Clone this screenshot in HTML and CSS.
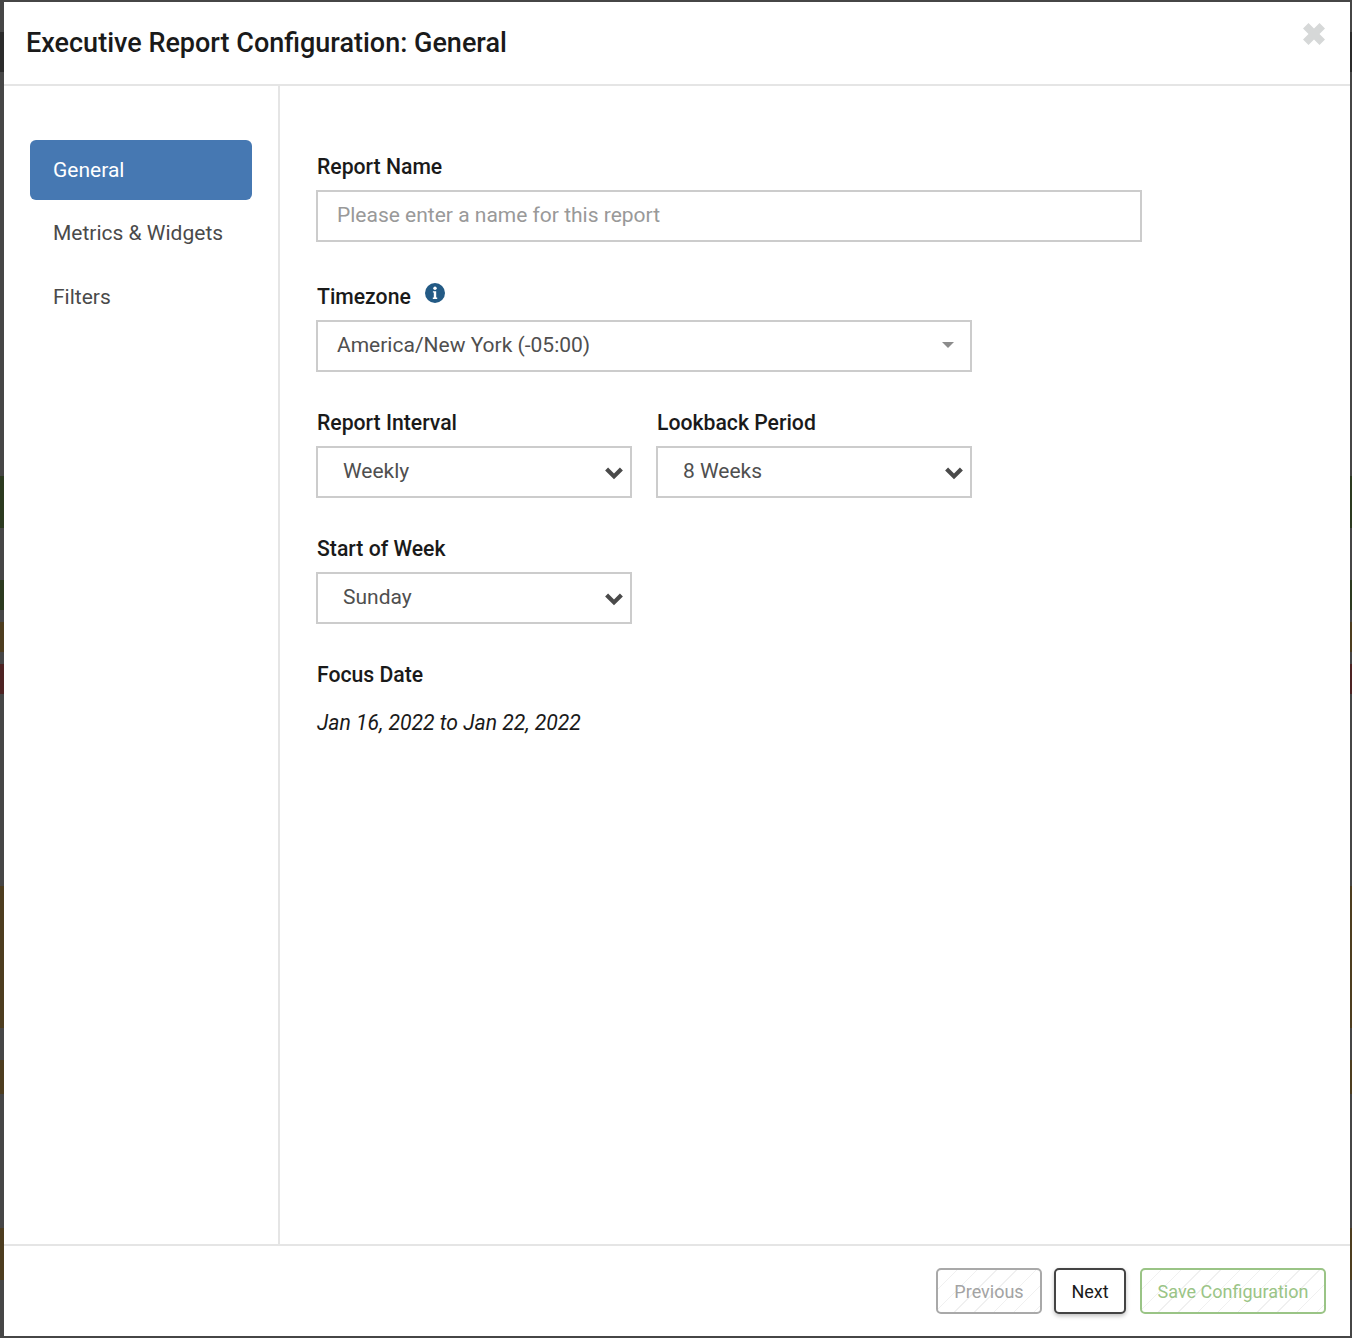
FILE: index.html
```html
<!DOCTYPE html>
<html lang="en">
<head>
<meta charset="utf-8">
<title>Executive Report Configuration</title>
<link rel="stylesheet" href="styles.css">
</head>
<body>
<div class="modal">
  <header class="modal-header">
    <h1 class="modal-title">Executive Report Configuration: General</h1>
    <svg class="close" viewBox="3 3 16 16" aria-label="Close"><path d="M3 7l4-4 4 4 4-4 4 4-4 4 4 4-4 4-4-4-4 4-4-4 4-4z"/></svg>
  </header>
  <div class="modal-body">
    <nav class="sidebar">
      <a class="nav-item active">General</a>
      <a class="nav-item">Metrics &amp; Widgets</a>
      <a class="nav-item">Filters</a>
    </nav>
    <main class="content">
      <div class="field field-name">
        <label class="label">Report Name</label>
        <input class="text-input" type="text" placeholder="Please enter a name for this report">
      </div>
      <div class="field">
        <label class="label label-icon">Timezone
          <svg class="info" viewBox="0 0 20 20"><circle cx="10" cy="10" r="10"/><circle class="info-mark" cx="10" cy="5.2" r="1.7"/><path class="info-mark" d="M7.9 8.2h3.3v6.4h1v1.4H7.8v-1.4h1V9.6h-.9z"/></svg>
        </label>
        <div class="select select-tz">
          <span class="select-value">America/New York (-05:00)</span>
          <span class="caret"></span>
        </div>
      </div>
      <div class="field-row">
        <div class="field">
          <label class="label">Report Interval</label>
          <div class="select select-small">
            <span class="select-value">Weekly</span>
            <svg class="chevron" viewBox="0 0 20 14"><path d="M2.6 3L10 10.4L17.4 3"/></svg>
          </div>
        </div>
        <div class="field">
          <label class="label">Lookback Period</label>
          <div class="select select-small">
            <span class="select-value">8 Weeks</span>
            <svg class="chevron" viewBox="0 0 20 14"><path d="M2.6 3L10 10.4L17.4 3"/></svg>
          </div>
        </div>
      </div>
      <div class="field">
        <label class="label">Start of Week</label>
        <div class="select select-small">
          <span class="select-value">Sunday</span>
          <svg class="chevron" viewBox="0 0 20 14"><path d="M2.6 3L10 10.4L17.4 3"/></svg>
        </div>
      </div>
      <div class="field">
        <label class="label">Focus Date</label>
        <p class="focus-date">Jan 16, 2022 to Jan 22, 2022</p>
      </div>
    </main>
  </div>
  <footer class="modal-footer">
    <button class="btn btn-disabled">Previous</button>
    <button class="btn btn-next">Next</button>
    <button class="btn btn-save">Save Configuration</button>
  </footer>
</div>
</body>
</html>
```

FILE: styles.css
```css
* { box-sizing: border-box; }
html, body { height: 100%; }
body {
  margin: 0;
  padding: 2px 2px 2px 4px;
  font-family: Roboto, "Liberation Sans", sans-serif;
  color: #1a1a1a;
  background-color: #464646;
  background-image: linear-gradient(to bottom,
    #464646 0, #464646 32px, #2b2b2b 32px, #2b2b2b 72px, #464646 72px,
    #464646 476px, #2c3a20 476px, #2c3a20 528px, #464646 528px,
    #464646 580px, #2c3a20 580px, #2c3a20 610px, #464646 610px,
    #464646 622px, #4d3d1f 622px, #4d3d1f 652px, #464646 652px,
    #464646 664px, #4e2323 664px, #4e2323 694px, #464646 694px,
    #464646 886px, #4d3d1f 886px, #4d3d1f 1028px, #464646 1028px,
    #464646 1060px, #4d3d1f 1060px, #4d3d1f 1094px, #464646 1094px,
    #464646 1228px, #4d3d1f 1228px, #4d3d1f 1280px, #464646 1280px);
}
.modal {
  height: 1334px;
  display: flex;
  flex-direction: column;
  background: #fff;
}
.modal-header {
  flex: 0 0 84px;
  display: flex;
  justify-content: space-between;
  align-items: flex-start;
  padding: 0 25px 0 22px;
  border-bottom: 2px solid #e5e5e5;
}
.modal-title {
  margin: 24px 0 0;
  font-size: 27px;
  line-height: 34px;
  font-weight: 500;
  color: #1a1a1a;
}
.close { width: 22px; height: 22px; margin-top: 21px; fill: #d6d8d8; }
.modal-body { flex: 1; display: flex; min-height: 0; }
.sidebar {
  flex: 0 0 276px;
  border-right: 2px solid #e5e5e5;
  padding: 54px 26px 0;
  display: flex;
  flex-direction: column;
}
.nav-item {
  display: block;
  height: 60px;
  line-height: 61px;
  padding: 0 23px;
  font-size: 21px;
  color: #4a4a4a;
  border-radius: 6px;
  margin-bottom: 4px;
}
.nav-item.active { background: #4678b2; color: #fff; margin-bottom: 3px; }
.content { flex: 1; padding: 66px 0 0 36px; }
.field { margin-bottom: 36px; }
.field-name { margin-bottom: 40px; }
.field-row { display: flex; gap: 24px; }
.label {
  display: block;
  height: 30px;
  font-size: 21.2px;
  line-height: 30px;
  font-weight: 500;
  color: #1a1a1a;
  padding-left: 1px;
  margin-bottom: 8px;
}
.label-icon { display: flex; align-items: center; }
.info { width: 20px; height: 20px; margin: -8px 0 0 14px; fill: #235a85; }
.info-mark { fill: #fff; }
.text-input {
  display: block;
  width: 826px;
  height: 52px;
  border: 2px solid #cccccc;
  padding: 0 19px 3px;
  font: 400 21px Roboto, "Liberation Sans", sans-serif;
  color: #4a4a4a;
  outline: none;
}
.text-input::placeholder { color: #999; opacity: 1; }
.select {
  height: 52px;
  border: 2px solid #cccccc;
  background: #fff;
  display: flex;
  align-items: center;
  justify-content: space-between;
  font-size: 21px;
  color: #4f4f4f;
}
.select-value { margin-bottom: 2px; }
.select-tz { width: 656px; padding: 0 16px 0 19px; }
.select-small { width: 316px; padding: 0 6px 0 25px; }
.caret {
  width: 0;
  height: 0;
  margin-bottom: 2px;
  border-left: 6.5px solid transparent;
  border-right: 6.5px solid transparent;
  border-top: 6.5px solid #8c8c8c;
}
.chevron { width: 20px; height: 14px; fill: none; stroke: #4a4a4a; stroke-width: 4.2; margin-top: 1px; }
.focus-date {
  margin: 18px 0 0;
  padding-left: 1px;
  font-size: 21.2px;
  line-height: 30px;
  font-style: italic;
  color: #1a1a1a;
}
.modal-footer {
  flex: 0 0 92px;
  border-top: 2px solid #e5e5e5;
  display: flex;
  justify-content: flex-end;
  align-items: flex-start;
  gap: 12px;
  padding: 22px 24px 0 0;
}
.btn {
  height: 46px;
  padding: 1px 0 0;
  border-radius: 5px;
  border: 2px solid #444;
  background: #fff;
  font: 400 18px Roboto, "Liberation Sans", sans-serif;
  color: #1a1a1a;
}
.btn-next { width: 72px; box-shadow: 0 2px 4px rgba(0,0,0,.25); margin-right: 2px; }
.btn-disabled, .btn-save {
  background-image: repeating-linear-gradient(135deg, transparent 0, transparent 13px, #f0f0f0 13px, #f0f0f0 14px);
}
.btn-disabled { width: 106px; border-color: #a9a9a9; color: #a3a3a3; }
.btn-save { width: 186px; border-color: #9ac486; color: #9ac486; }
```
